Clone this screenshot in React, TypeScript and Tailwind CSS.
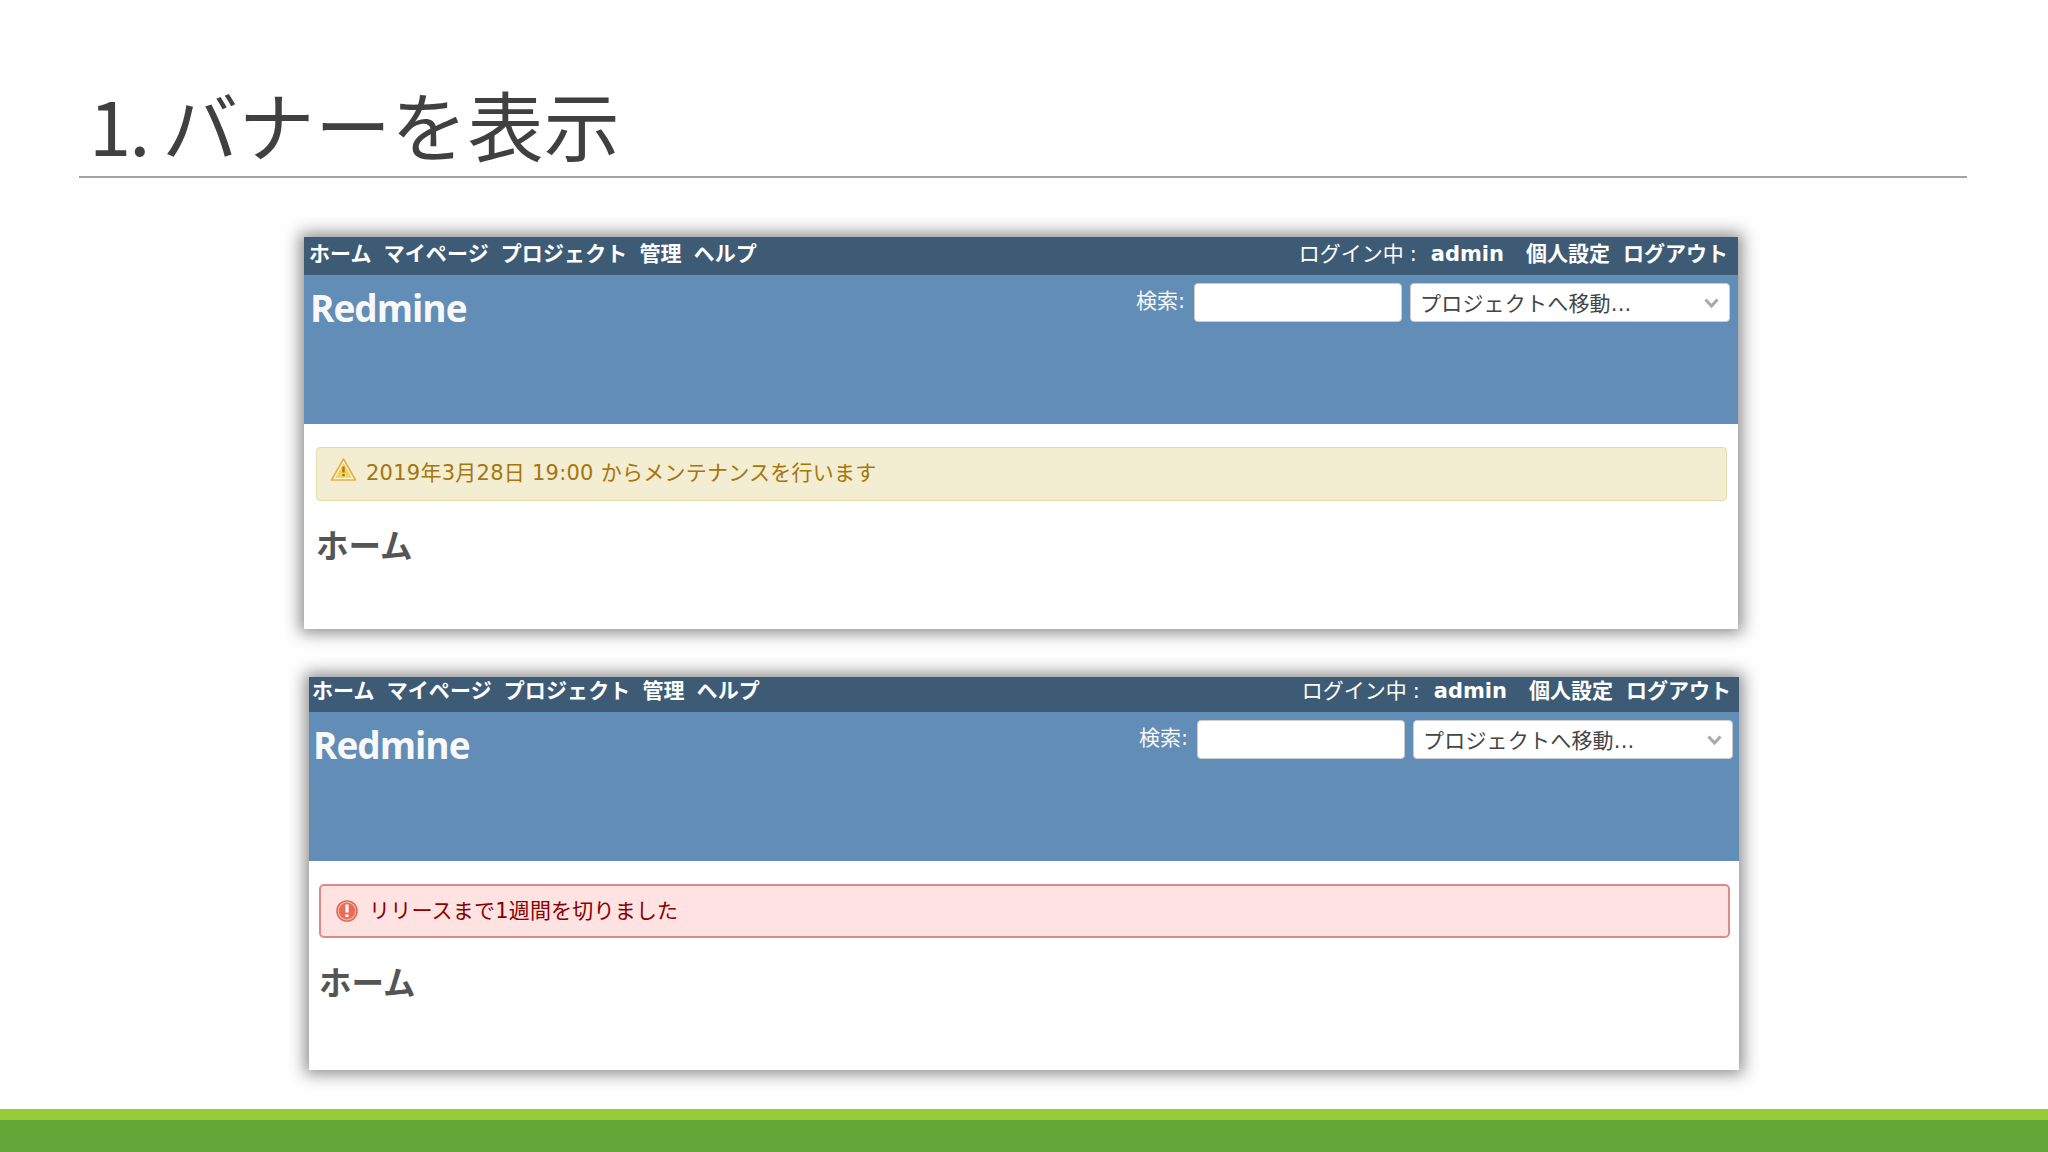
import React from 'react';

const menuItems = ['ホーム', 'マイページ', 'プロジェクト', '管理', 'ヘルプ'];

const WarningIcon = () => (
  <svg className="-mt-[1px] w-[27px] h-[25px] shrink-0" viewBox="0 0 27 25">
    <path d="M13.5 2 L25.5 23 H1.5 Z" fill="#fff6d6" stroke="#e3ae4e" strokeWidth="1.6" strokeLinejoin="round" />
    <path d="M13.5 6 L21.8 20.8 H5.2 Z" fill="#f5d05a" />
    <path d="M13.5 9.5 V15.5 M13.5 17 V19.2" stroke="#a87a1e" strokeWidth="2.4" />
  </svg>
);

const ErrorIcon = () => (
  <svg className="w-[24px] h-[24px] shrink-0" viewBox="0 0 24 24">
    <circle cx="12" cy="12" r="10.8" fill="#dd6552" />
    <circle cx="12" cy="12" r="8.8" fill="#ea6c58" stroke="#f5b3a3" strokeWidth="1.2" />
    <path d="M12 5.5 V13.5 M12 15.5 V18" stroke="#fff" strokeWidth="3.2" />
  </svg>
);

type PanelProps = {
  className: string;
  innerClassName: string;
  children: React.ReactNode;
};

const Panel = ({ className, innerClassName, children }: PanelProps) => (
  <section className={`overflow-hidden bg-white shadow-[0_0_15px_4px_rgba(0,0,0,0.45)] ${className}`}>
    <div className={`w-[1434px] text-[21px] leading-[26px] ${innerClassName}`}>
      {/* Top menu */}
      <div className="flex h-[38px] justify-between bg-[#3e5b76] pl-[5px] pr-[10px] pt-[4px] text-white">
        <nav className="flex gap-[12px] font-bold tracking-[0.1px]">
          {menuItems.map((item) => (
            <a key={item}>{item}</a>
          ))}
        </nav>
        <div className="flex">
          <span>ログイン中</span>
          <span className="w-[21px] pl-[6px]">:</span>
          <b className="ml-[6px]">admin</b>
          <b className="ml-[22px]">個人設定</b>
          <b className="ml-[13px]">ログアウト</b>
        </div>
      </div>

      {/* Header */}
      <header className="flex h-[149px] justify-between bg-[#628db6] pl-[6px] pr-[8px] pt-[8px] text-[#f8f8f8]">
        <h1 className="font-['Open_Sans','Noto_Sans',sans-serif] text-[37px] font-bold leading-[50px] tracking-[-1px]">Redmine</h1>
        <div className="flex h-[39px]">
          <span className="mr-[9px] mt-[5px]">検索:</span>
          <div className="w-[208px] rounded-[4px] border border-[#ccc] bg-white" />
          <div className="ml-[8px] flex w-[320px] items-center justify-between rounded-[4px] border border-[#ccc] bg-white pl-[9px] pr-[10px] text-[#444]">
            <span className="mt-[2px] tracking-[0.2px]">プロジェクトへ移動...</span>
            <svg className="mt-[1px] w-[15px] h-[11px]" viewBox="0 0 15 11" fill="none" stroke="#a9a9a9" strokeWidth="3">
              <path d="M1.5 1.5 L7.5 8 L13.5 1.5" />
            </svg>
          </div>
        </div>
      </header>

      {/* Content */}
      <main className="pl-[12px] pr-[11px] pt-[23px]">
        {children}
        <h2 className="mt-[23px] text-[32.5px] font-bold leading-[46px] text-[#555]">ホーム</h2>
      </main>
    </div>
  </section>
);

const App = () => {
  return (
    <div className="flex h-[1152px] w-[2048px] flex-col overflow-hidden bg-[#fefefe] font-['DejaVu_Sans','Noto_Sans_CJK_JP',sans-serif]">
      <h1 className="ml-[79px] mr-[81px] flex h-[178px] border-b-2 border-[#a3a3a3] pl-[10px] pt-[68px] font-['Noto_Sans_CJK_JP',sans-serif] text-[76px] leading-[110px] text-[#404040]">
        <span className="tracking-[-2px]">1.</span>
        <span className="ml-[14px] tracking-[0.3px]">バナーを表示</span>
      </h1>

      <Panel className="ml-[304px] mt-[59px] h-[392px] w-[1434px] shrink-0" innerClassName="">
        <div className="flex h-[54px] rounded-[4px] border border-[#e3dcae] bg-[#f3edd1] pl-[13px] pt-[10px] text-[#a6750c]">
          <WarningIcon />
          <span className="ml-[9px] mt-[2px] tracking-[0.25px]">2019年3月28日 19:00 からメンテナンスを行います</span>
        </div>
      </Panel>

      <Panel className="ml-[309px] mt-[48px] h-[393px] w-[1430px] shrink-0" innerClassName="-ml-[2px] -mt-[3px]">
        <div className="flex h-[54px] rounded-[5px] border-2 border-[#dd8a8a] bg-[#ffe3e3] pl-[14px] pt-[13px] text-[#880000]">
          <ErrorIcon />
          <span className="ml-[10px] -mt-[1px] tracking-[0.2px]">リリースまで1週間を切りました</span>
        </div>
      </Panel>

      <footer className="mt-auto h-[43px] shrink-0 border-t-[11px] border-[#99cb38] bg-[#63a537]" />
    </div>
  );
};

export default App;
